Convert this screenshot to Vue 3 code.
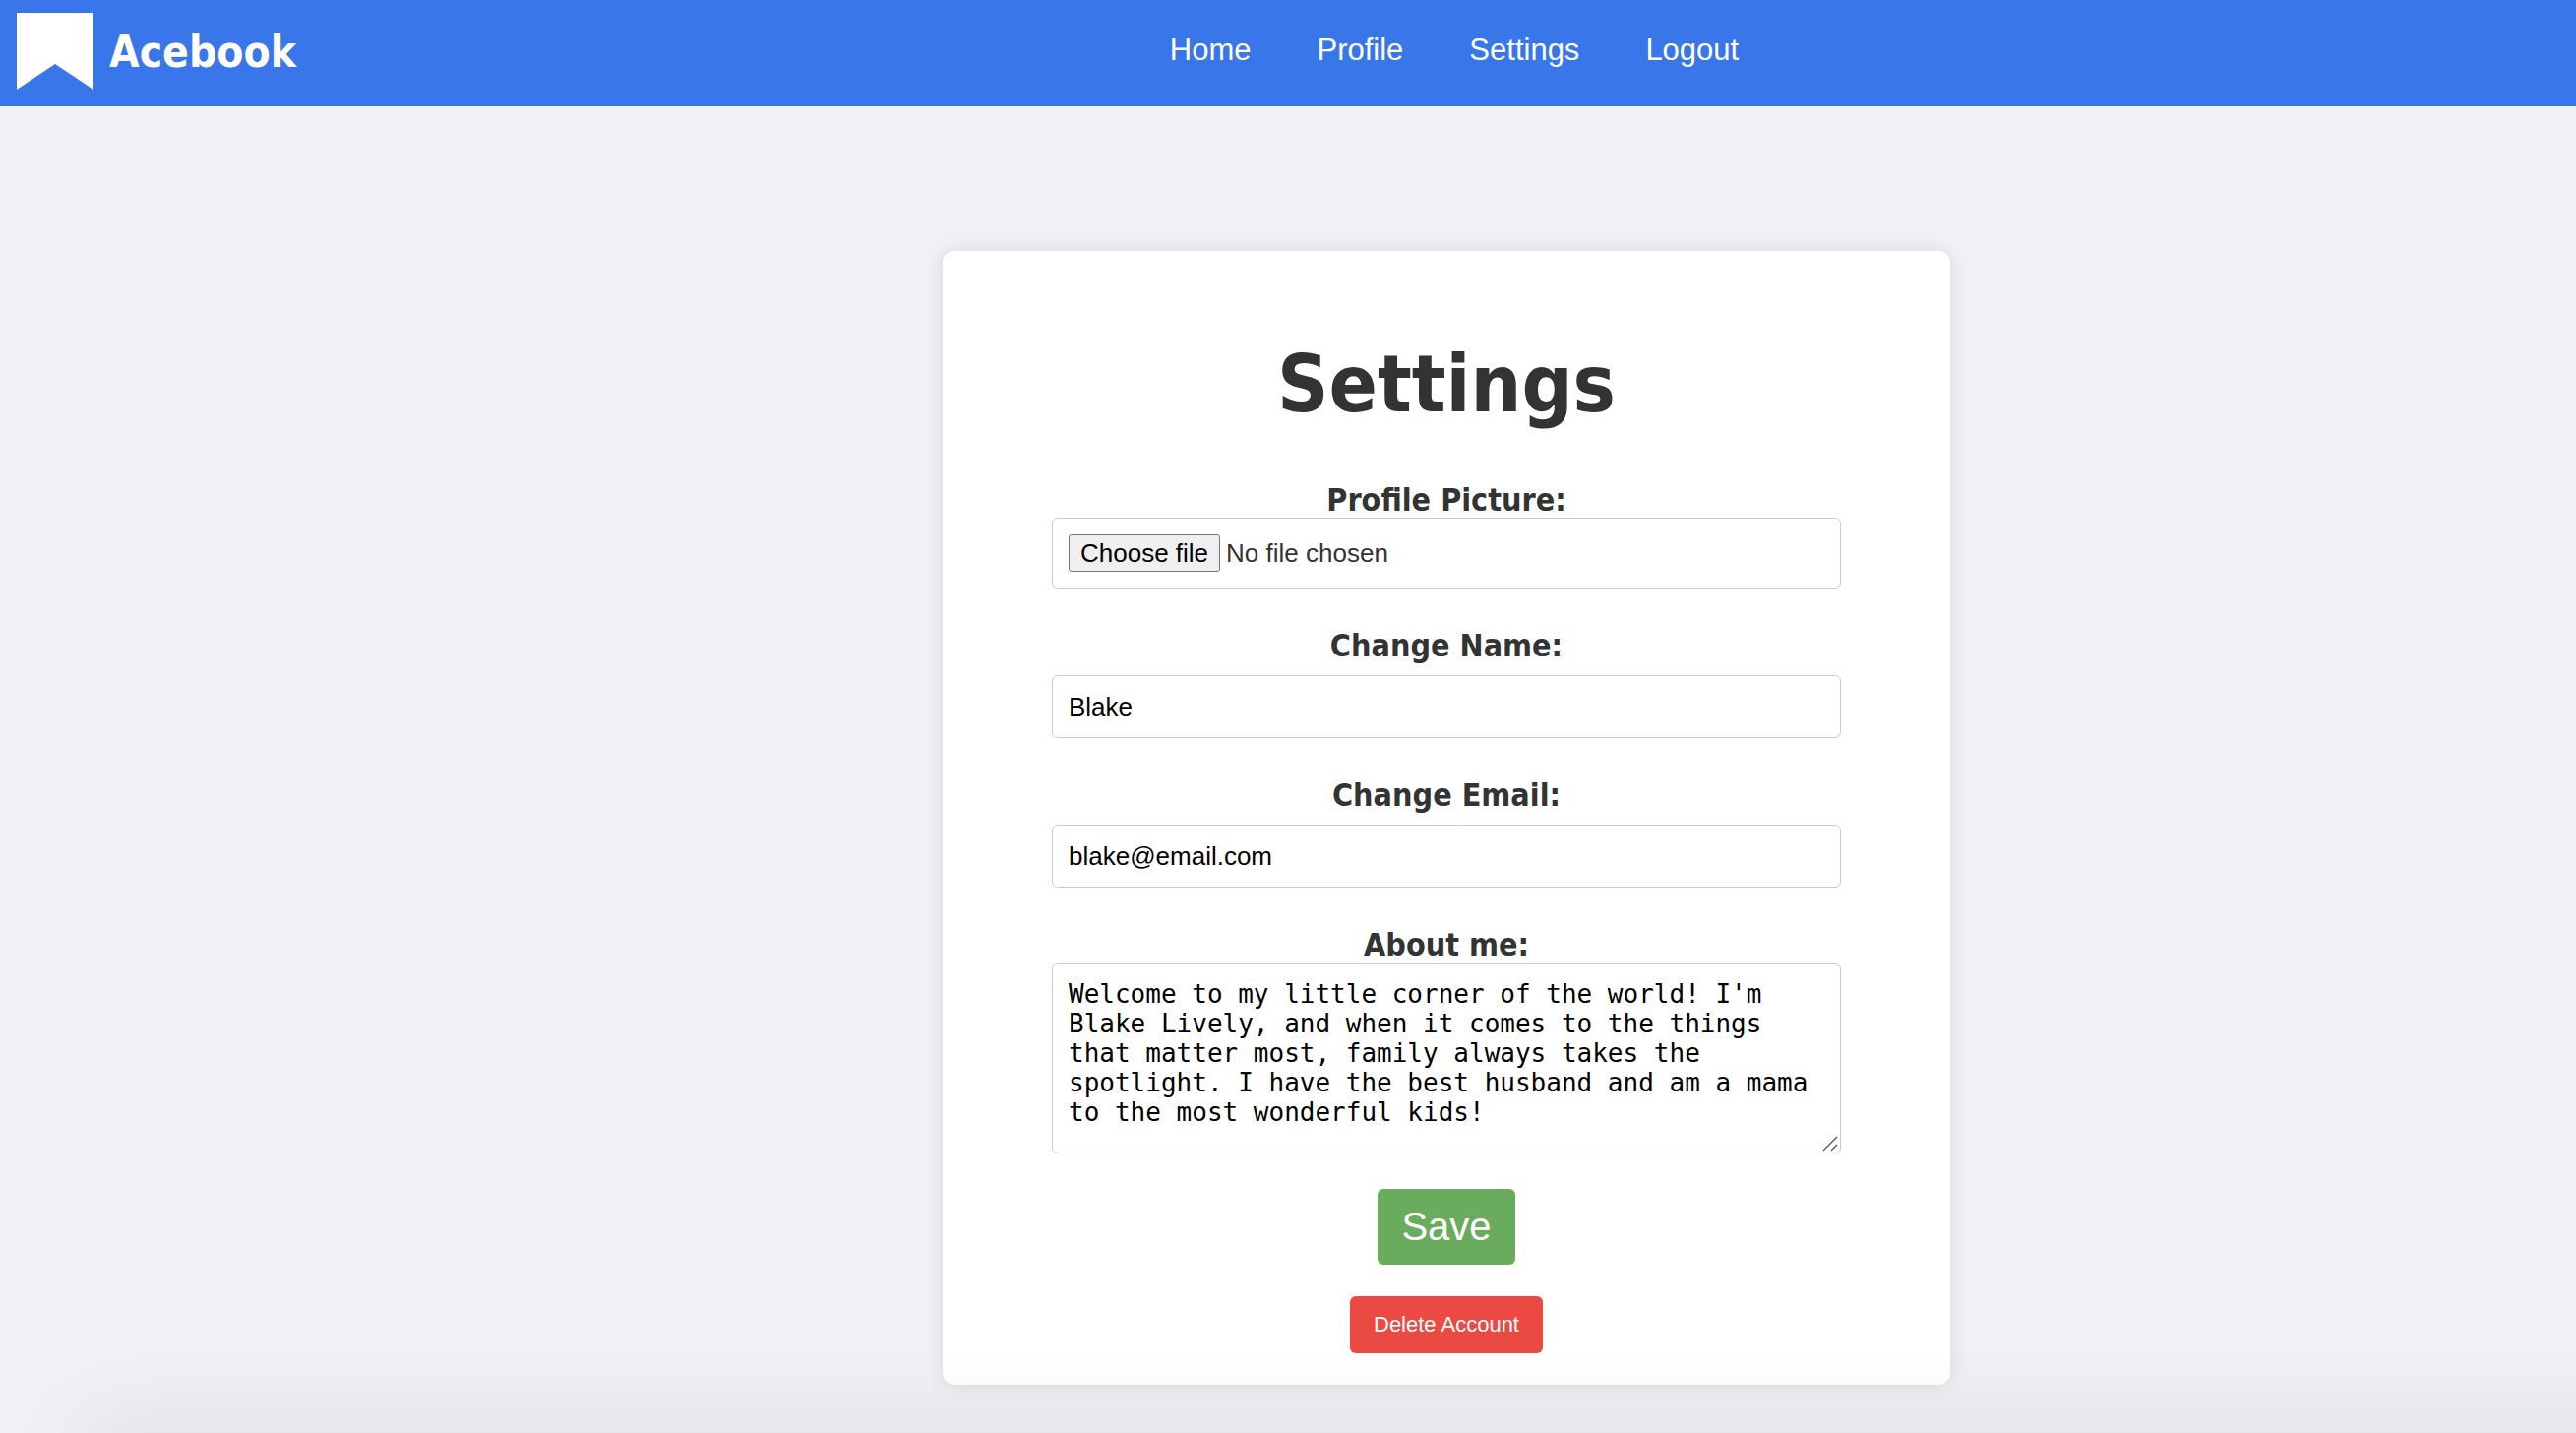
<script setup>
import { ref } from 'vue'

const links = ['Home', 'Profile', 'Settings', 'Logout']
const picker = ref(null)
const fileName = ref('No file chosen')
const name = ref('Blake')
const email = ref('blake@email.com')
const about = ref(
  "Welcome to my little corner of the world! I'm Blake Lively, and when it comes to the things that matter most, family always takes the spotlight. I have the best husband and am a mama to the most wonderful kids!"
)

function onPick(event) {
  const file = event.target.files[0]
  fileName.value = file ? file.name : 'No file chosen'
}
</script>

<template>
  <div class="page">
    <header class="topbar">
      <a class="brand" href="#">
        <svg class="ribbon" viewBox="0 0 78 78" aria-hidden="true">
          <path d="M0 0H78V78L39 52L0 78Z" fill="#fff" />
        </svg>
        <span>Acebook</span>
      </a>
      <nav class="links">
        <a v-for="link in links" :key="link" href="#">{{ link }}</a>
      </nav>
    </header>

    <main class="content">
      <section class="card">
        <h1>Settings</h1>
        <form class="form" @submit.prevent>
          <div class="field">
            <label for="picture">Profile Picture:</label>
            <div class="box file">
              <input id="picture" ref="picker" type="file" tabindex="-1" @change="onPick" />
              <button class="choose" type="button" @click="picker.click()">Choose file</button>
              <span>{{ fileName }}</span>
            </div>
          </div>
          <div class="field spaced">
            <label for="name">Change Name:</label>
            <input id="name" v-model="name" class="box text" type="text" />
          </div>
          <div class="field spaced">
            <label for="email">Change Email:</label>
            <input id="email" v-model="email" class="box text" type="email" />
          </div>
          <div class="field">
            <label for="about">About me:</label>
            <div class="area">
              <textarea id="about" v-model="about" class="box about" spellcheck="false"></textarea>
              <svg class="grip" viewBox="0 0 16 16" aria-hidden="true">
                <path d="M1 15L15 1M9 15L15 9" fill="none" stroke="#555" stroke-width="1.4" />
              </svg>
            </div>
          </div>
          <button class="action save" type="submit">Save</button>
        </form>
        <button class="action delete" type="button">Delete Account</button>
      </section>
    </main>
  </div>
</template>

<style>
body {
  margin: 0;
  background: #f0f1f5;
}
</style>

<style scoped>
.page {
  position: relative;
  box-sizing: border-box;
  min-height: 100vh;
  overflow: hidden;
  background: #f0f1f5;
  color: #333;
  font-family: "DejaVu Sans Condensed", "Noto Sans", sans-serif;
}

/* Soft shade rising from the bottom edge of the window */
.page::after {
  content: "";
  position: absolute;
  right: -90px;
  bottom: -40px;
  left: 90px;
  height: 40px;
  box-shadow: 0 0 90px rgba(0, 0, 0, 0.14);
  pointer-events: none;
}

.topbar {
  display: flex;
  align-items: center;
  height: 108px;
  background: #3976ea;
}

.brand {
  display: flex;
  align-items: center;
  gap: 16px;
  min-width: 321px;
  padding: 0 0 4px 17px;
  color: #fff;
  font-size: 44px;
  font-weight: 700;
  text-decoration: none;
}

.ribbon {
  width: 78px;
  height: 78px;
}

.links {
  display: flex;
  flex: 1;
  justify-content: center;
  gap: 67px;
  padding-bottom: 6px;
  font-family: "Liberation Sans", Arial, sans-serif;
  font-size: 31px;
}

.links a {
  color: #fff;
  text-decoration: none;
}

.content {
  display: flex;
  justify-content: center;
  padding: 147px 0 48px 322px;
}

.card {
  display: flex;
  flex-direction: column;
  align-items: center;
  box-sizing: border-box;
  width: 100%;
  max-width: 1024px;
  padding: 88px 111px 32px;
  border-radius: 12px;
  background: #fff;
  box-shadow: 0 0 20px rgba(0, 0, 0, 0.1);
}

h1 {
  margin: 0 0 53px;
  font-size: 81px;
  font-weight: 700;
  line-height: 94px;
}

.form {
  display: flex;
  flex-direction: column;
  align-items: center;
  width: 100%;
}

.field {
  display: flex;
  flex-direction: column;
  width: 100%;
  margin-bottom: 40px;
}

.spaced {
  gap: 12px;
}

label {
  font-size: 32px;
  font-weight: 700;
  line-height: 36px;
  text-align: center;
}

.box {
  box-sizing: border-box;
  width: 100%;
  border: 1px solid #ccc;
  border-radius: 6px;
  background: #fff;
  font-family: "Liberation Sans", Arial, sans-serif;
  font-size: 26px;
}

.file {
  position: relative;
  display: flex;
  align-items: center;
  gap: 6px;
  height: 72px;
  padding: 0 16px;
}

.file input {
  position: absolute;
  inset: 0;
  width: 100%;
  opacity: 0;
}

.choose {
  position: relative;
  height: 38px;
  padding: 0 11px;
  border: 1px solid #767676;
  border-radius: 3px;
  background: #efefef;
  color: #000;
  font: inherit;
  line-height: 34px;
}

.text {
  height: 64px;
  padding: 0 16px;
  color: #000;
}

.area {
  position: relative;
}

.about {
  display: block;
  height: 194px;
  padding: 16px;
  color: #000;
  font-family: "DejaVu Sans Mono", monospace;
  line-height: 30px;
  resize: vertical;
}

.about::-webkit-resizer {
  background: transparent;
}

.grip {
  position: absolute;
  right: 3px;
  bottom: 2px;
  width: 16px;
  height: 16px;
  pointer-events: none;
}

.field:last-of-type {
  margin-bottom: 36px;
}

.action {
  border: 0;
  border-radius: 6px;
  padding: 0 24px;
  color: #fff;
  font-family: "Liberation Sans", Arial, sans-serif;
}

.save {
  height: 77px;
  background: #6aac5e;
  font-size: 40px;
}

.delete {
  height: 58px;
  margin-top: 32px;
  background: #eb4a42;
  font-size: 22px;
}
</style>
